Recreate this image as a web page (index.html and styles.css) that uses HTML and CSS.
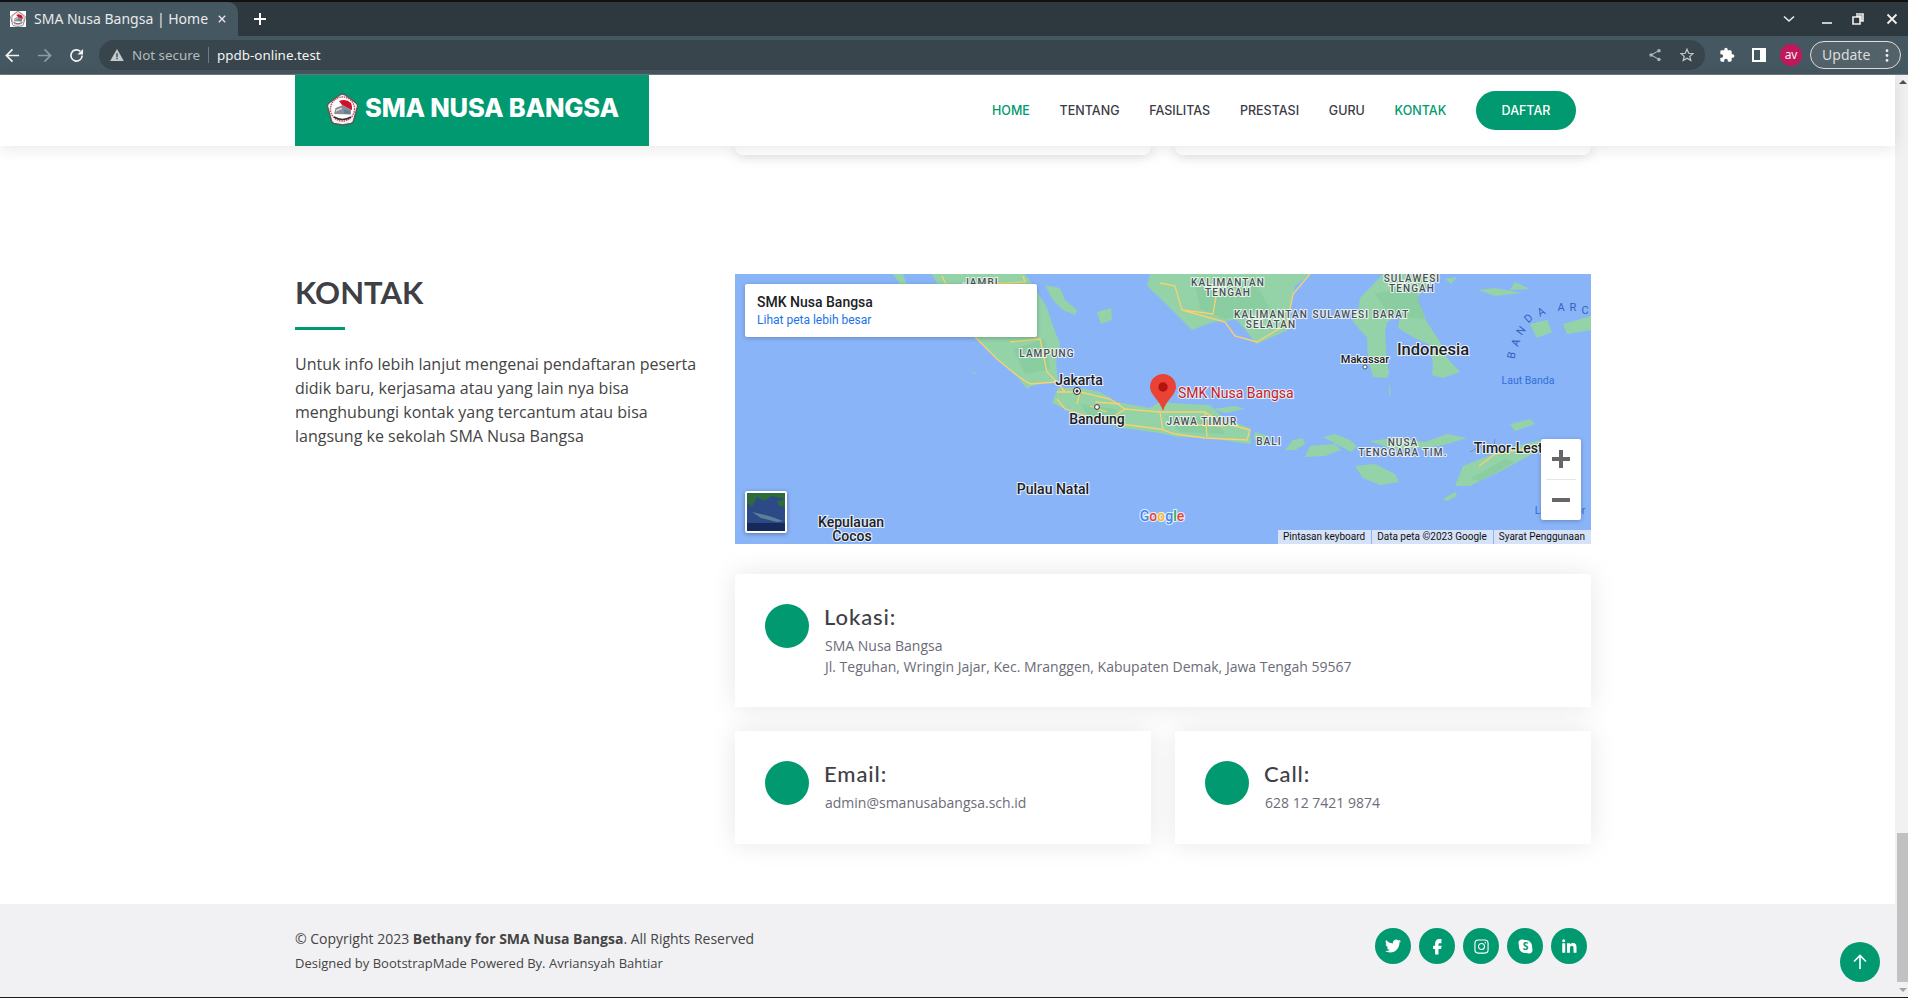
FILE: index.html
```html
<!DOCTYPE html>
<html lang="id">
<head>
<meta charset="utf-8">
<title>SMA Nusa Bangsa | Home</title>
<link rel="stylesheet" href="styles.css">
</head>
<body>
<svg class="defs" width="0" height="0" aria-hidden="true">
  <symbol id="emblem" viewBox="0 0 33 33">
    <path d="M16.5 1 Q17.500 1 18.500 1.500 L30 10 Q32 11.500 31.500 13.500 L27.500 28 Q27 30 25 30.500 L16.500 32 L8 30.500 Q6 30 5.500 28 L1.500 13.500 Q1 11.500 3 10 L14.500 1.500 Q15.500 1 16.5 1 Z" fill="#f2f2f2" stroke="#5a5a5a" stroke-width="1.400"/>
    <circle cx="16.5" cy="16" r="12" fill="#fff" stroke="#c9505c" stroke-width="1.400" stroke-dasharray="1.500 .8"/>
    <path d="M13 8 Q20 5 25 10 Q26.500 13 26 17 L18 14.500 Z" fill="#d0112b"/>
    <path d="M8 21 L9.500 15 L17 12 L25 16.500 L25 21.500 Z" fill="#8b8f94"/>
    <path d="M10 17 L16 14.500 L16 16 L10 18.500 Z" fill="#dfe2e4"/>
    <path d="M18 16.500 L24 18 L24 21 L18 20.500 Z" fill="#5f7f9c"/>
    <path d="M8 24 Q16.500 29 25 24" fill="none" stroke="#333" stroke-width="1.600"/>
  </symbol>
</svg>

<header class="chrome">
  <div class="tabstrip">
    <div class="tab">
      <svg class="favicon" aria-hidden="true"><use href="#emblem"/></svg>
      <span class="tab-title">SMA Nusa Bangsa | Home</span>
      <svg class="tab-close" viewBox="0 0 10 10" aria-hidden="true"><path d="M1 1 L9 9 M9 1 L1 9"/></svg>
    </div>
    <svg class="new-tab" viewBox="0 0 12 12" aria-hidden="true"><path d="M6 0 V12 M0 6 H12"/></svg>
    <div class="strip-space"></div>
    <svg class="tab-list" viewBox="0 0 12 8" aria-hidden="true"><path d="M1 1.500 L6 6 L11 1.500"/></svg>
    <svg class="win min" viewBox="0 0 12 12" aria-hidden="true"><path d="M1 10 H11"/></svg>
    <svg class="win restore" viewBox="0 0 12 12" aria-hidden="true"><path d="M4 1 H11 V8 H9 M1 4 H8 V11 H1 Z M4 3 H9 V8"/></svg>
    <svg class="win close" viewBox="0 0 12 12" aria-hidden="true"><path d="M1.500 1.500 L10.500 10.500 M10.500 1.500 L1.500 10.500"/></svg>
  </div>
  <div class="toolbar">
    <svg class="nav-ic" viewBox="0 0 16 16" aria-hidden="true"><path d="M15 8 H1.500 M8 1.500 L1.500 8 L8 14.500"/></svg>
    <svg class="nav-ic dim" viewBox="0 0 16 16" aria-hidden="true"><path d="M1 8 H14.500 M8 1.500 L14.500 8 L8 14.500"/></svg>
    <svg class="nav-ic" viewBox="0 0 16 16" aria-hidden="true"><path d="M14 8 A6 6 0 1 1 12 3.500"/><path class="solid" d="M15 1 V7 H9 Z"/></svg>
    <div class="omnibox">
      <svg class="warn" viewBox="0 0 16 14" aria-hidden="true"><path d="M8 0 L16 14 H0 Z" fill="#c4c9cc"/><path d="M7.200 5 H8.800 V9.500 H7.200 Z M7.200 10.500 H8.800 V12 H7.200 Z" fill="#38454c"/></svg>
      <span class="not-secure">Not secure</span>
      <span class="omni-div"></span>
      <span class="url">ppdb-online.test</span>
      <span class="omni-space"></span>
      <svg class="omni-ic" viewBox="0 0 16 16" aria-hidden="true"><circle cx="3.500" cy="8" r="2"/><circle cx="12.500" cy="3" r="2"/><circle cx="12.500" cy="13" r="2"/><path class="ln" d="M3.500 8 L12.500 3 M3.500 8 L12.500 13"/></svg>
      <svg class="omni-ic star" viewBox="0 0 16 16" aria-hidden="true"><path d="M8 1.500 L10 6 L14.800 6.400 L11.200 9.600 L12.300 14.400 L8 11.800 L3.700 14.400 L4.800 9.600 L1.200 6.400 L6 6 Z"/></svg>
    </div>
    <svg class="tool-ic puzzle" viewBox="0 0 24 24" aria-hidden="true"><path d="M20.500 11H19V7c0-1.100-.9-2-2-2h-4V3.500C13 2.120 11.880 1 10.500 1S8 2.120 8 3.500V5H4c-1.100 0-1.990.9-1.990 2v3.800H3.500c1.490 0 2.700 1.210 2.700 2.700s-1.210 2.700-2.700 2.700H2V20c0 1.100.9 2 2 2h3.800v-1.500c0-1.490 1.210-2.700 2.700-2.700 1.490 0 2.700 1.210 2.700 2.700V22H17c1.100 0 2-.9 2-2v-4h1.500c1.380 0 2.500-1.120 2.500-2.500S21.880 11 20.500 11z"/></svg>
    <svg class="tool-ic panel" viewBox="0 0 14 14" aria-hidden="true"><path d="M0 0 H14 V14 H0 Z M2 2 V12 H8 V2 Z" fill-rule="evenodd"/></svg>
    <span class="avatar">av</span>
    <div class="update">
      <span>Update</span>
      <svg class="dots" viewBox="0 0 4 16" aria-hidden="true"><circle cx="2" cy="2" r="1.700"/><circle cx="2" cy="8" r="1.700"/><circle cx="2" cy="14" r="1.700"/></svg>
    </div>
  </div>
</header>

<div class="viewport">
  <div class="page">
    <div class="site-header">
      <a class="brand">
        <svg class="brand-logo" aria-hidden="true"><use href="#emblem"/></svg>
        <span class="brand-name">SMA NUSA BANGSA</span>
      </a>
      <nav class="menu">
        <a class="menu-link active">HOME</a>
        <a class="menu-link">TENTANG</a>
        <a class="menu-link">FASILITAS</a>
        <a class="menu-link">PRESTASI</a>
        <a class="menu-link">GURU</a>
        <a class="menu-link active">KONTAK</a>
        <a class="cta">DAFTAR</a>
      </nav>
    </div>

    <main class="content">
      <div class="prev-cards">
        <div class="prev-card"></div>
        <div class="prev-card"></div>
      </div>

      <section class="contact">
        <div class="intro">
          <h2 class="title">KONTAK</h2>
          <p class="lead">Untuk info lebih lanjut mengenai pendaftaran peserta didik baru, kerjasama atau yang lain nya bisa menghubungi kontak yang tercantum atau bisa langsung ke sekolah SMA Nusa Bangsa</p>
        </div>
        <div class="details">
          <div class="map">
            <svg class="map-svg" viewBox="0 0 856 270" width="856" height="270">
              <rect width="856" height="270" fill="#8ab4f8"/>
              <g class="land">
                <path d="M158 0 L168 0 L172 11 L165 10 Z"/>
                <path d="M197 0 L290 0 L300 14 L312 34 L318 52 L325 70 L321 88 L323 108 L312 108 L296 112 L292 115 L280 100 L262 85 L240 63 L225 50 L210 25 Z"/>
                <path d="M310 11 L325 14 L330 26 L342 36 L340 41 L328 36 L318 26 Z"/>
                <path d="M362 38 L376 34 L377 46 L366 50 Z"/>
                <path d="M237 97 L243 100 L240 100 Z"/>
                <path d="M317 129 L323 114 L345 114 L365 118 L382 128 L415 134 L425 128 L450 130 L475 131 L490 145 L515 154 L516 170 L500 168 L475 164 L442 163 L425 159 L388 154 L362 146 L328 134 Z"/>
                <path d="M478 135 L500 132 L510 135 L490 139 Z"/>
                <path d="M520 158 L534 162 L530 170 L519 165 Z"/>
                <path d="M550 176 L558 166 L568 164 L570 170 L560 176 Z"/>
                <path d="M570 183 L575 172 L600 170 L606 176 L590 182 Z"/>
                <path d="M588 163 L600 160 L615 166 L622 172 L616 178 L605 172 Z"/>
                <path d="M635 167 L660 164 L690 168 L712 160 L732 164 L705 172 L660 176 Z"/>
                <path d="M620 192 L640 190 L660 200 L664 208 L645 211 L628 204 Z"/>
                <path d="M720 212 L728 192 L770 175 L806 166 L806 175 L770 195 L735 212 Z"/>
                <path d="M708 225 L720 218 L722 222 L712 227 Z"/>
                <path d="M775 150 L795 145 L800 150 L780 157 Z"/>
                <path d="M415 0 L575 0 L560 12 L557 24 L553 56 L522 70 L502 46 L478 48 L457 56 L425 24 L412 12 Z"/>
                <path d="M648 0 L625 24 L623 39 L617 46 L625 56 L632 63 L633 84 L638 103 L652 104 L654 98 L652 88 L650 58 L652 48 L665 41 L663 54 L678 63 L695 71 L698 91 L697 101 L708 104 L725 98 L712 84 L705 68 L692 48 L682 24 L692 11 L705 4 L702 0 Z"/>
                <path d="M654 108 L656 122 L654 120 Z"/>
                <path d="M743 16 L760 14 L787 19 L760 22 Z"/>
                <path d="M710 5 L722 3 L716 10 Z"/>
                <path d="M780 8 L795 15 L775 16 Z"/>
                <path d="M795 50 L812 46 L817 58 L802 64 Z"/>
                <path d="M828 50 L856 42 L856 56 L832 60 Z"/>
              </g>
              <g class="patch">
                <path d="M250 20 L285 10 L300 40 L270 60 Z"/>
                <path d="M278 75 L310 65 L315 95 L290 100 Z"/>
                <path d="M345 130 L380 135 L390 148 L355 145 Z"/>
                <path d="M460 10 L520 8 L535 35 L490 45 L465 35 Z"/>
                <path d="M430 142 L480 145 L490 160 L445 158 Z"/>
                <path d="M640 20 L680 10 L690 45 L655 42 Z"/>
                <path d="M735 205 L770 185 L780 188 L745 207 Z"/>
              </g>
              <g class="roads">
                <path d="M240 63 L262 85 L280 100 L295 110 L322 108"/>
                <path d="M275 68 L305 65 L312 98 L322 108 L330 118"/>
                <path d="M207 2 L215 18 M288 2 L290 8 L250 10"/>
                <path d="M322 118 L345 118 L375 125 L390 135 L425 138 L470 138 L485 148 L515 156 L512 166 L470 164 L440 160 L425 155 L385 150 L355 143 L330 135 L322 125"/>
                <path d="M345 118 L342 130 M390 135 L375 145 M425 138 L428 156 M470 138 L472 163 M360 128 L385 130 M355 132 L372 138 M440 150 L490 152"/>
                <path d="M425 9 L440 12 L447 36 L478 40 L482 16 M447 36 L490 48 L500 62 L522 68 L552 50 L558 20 L575 0"/>
                <path d="M744 192 L760 180 L806 172"/>
              </g>
              <g class="roads thin"><path d="M735 178 L745 172 L752 180 M760 165 L758 178"/></g>

              <text class="l caps" x="246" y="12">JAMBI</text>
              <text class="l caps" x="312" y="83">LAMPUNG</text>
              <text class="l caps" x="493" y="12">KALIMANTAN</text>
              <text class="l caps" x="493" y="22">TENGAH</text>
              <text class="l caps" x="536" y="44">KALIMANTAN</text>
              <text class="l caps" x="536" y="54">SELATAN</text>
              <text class="l caps" x="626" y="44">SULAWESI BARAT</text>
              <text class="l caps" x="677" y="8">SULAWESI</text>
              <text class="l caps" x="677" y="18">TENGAH</text>
              <text class="l caps" x="467" y="151">JAWA TIMUR</text>
              <text class="l caps" x="534" y="171">BALI</text>
              <text class="l caps" x="668" y="172">NUSA</text>
              <text class="l caps" x="668" y="182">TENGGARA TIM.</text>

              <text class="l city" x="344" y="111">Jakarta</text>
              <text class="l city" x="362" y="150">Bandung</text>
              <text class="l city" x="777" y="179">Timor-Leste</text>
              <text class="l city sm" x="630" y="89">Makassar</text>
              <text class="l country" x="698" y="81">Indonesia</text>
              <text class="l city" x="318" y="220">Pulau Natal</text>
              <text class="l city" x="116" y="253">Kepulauan</text>
              <text class="l city" x="117" y="267">Cocos</text>

              <text class="l sea" x="793" y="110">Laut Banda</text>
              <text class="l sea" x="825" y="240">Laut Timor</text>
              <g class="arc">
                <text transform="translate(780 82) rotate(-80)">B</text>
                <text transform="translate(784 70) rotate(-68)">A</text>
                <text transform="translate(789 59) rotate(-52)">N</text>
                <text transform="translate(796 47) rotate(-42)">D</text>
                <text transform="translate(808 41) rotate(-28)">A</text>
                <text transform="translate(826 37)">A</text>
                <text transform="translate(838 37)">R</text>
                <text transform="translate(850 40)">C</text>
              </g>

              <circle cx="342" cy="117" r="3.500" fill="#fff" stroke="#222" stroke-width="1"/>
              <circle cx="342" cy="117" r="1.500" fill="#222"/>
              <circle cx="362" cy="133" r="2.400" fill="#fff" stroke="#333" stroke-width="1"/>
              <circle cx="630" cy="93" r="2" fill="#fff" stroke="#333" stroke-width=".8"/>

              <path d="M428 137 C425 126 415 121 415 113 A13 13 0 1 1 441 113 C441 121 431 126 428 137 Z" fill="#ea4335"/>
              <circle cx="428" cy="113" r="4.700" fill="#b31412"/>
              <text class="l pin" x="443" y="124">SMK Nusa Bangsa</text>

              <text class="l logo" x="427" y="247"><tspan fill="#4285f4">G</tspan><tspan fill="#ea4335">o</tspan><tspan fill="#fbbc04">o</tspan><tspan fill="#4285f4">g</tspan><tspan fill="#34a853">l</tspan><tspan fill="#ea4335">e</tspan></text>
            </svg>

            <div class="place-card">
              <div class="place-name">SMK Nusa Bangsa</div>
              <a class="place-link">Lihat peta lebih besar</a>
            </div>

            <div class="layer-thumb">
              <svg viewBox="0 0 38 38" width="38" height="38" aria-hidden="true">
                <rect width="38" height="38" fill="#2b4a86"/>
                <path d="M0 0 H38 V6 L24 3 L18 8 L10 4 L5 14 L0 10 Z" fill="#2f6a3d"/>
                <path d="M30 8 L38 6 V14 L32 13 Z" fill="#2f6a3d"/>
                <path d="M5 19 L22 23 L36 28 L30 29 L14 25 Z" fill="#5f7f98"/>
                <path d="M0 30 H38 V38 H0 Z" fill="#16295c"/>
              </svg>
            </div>

            <div class="zoom-ctl">
              <button class="zoom-btn" aria-label="Zoom in"><svg viewBox="0 0 18 18" width="18" height="18"><path d="M0 7 H7 V0 H11 V7 H18 V11 H11 V18 H7 V11 H0 Z"/></svg></button>
              <span class="zoom-sep"></span>
              <button class="zoom-btn" aria-label="Zoom out"><svg viewBox="0 0 18 18" width="18" height="18"><path d="M0 7 H18 V11 H0 Z"/></svg></button>
            </div>

            <div class="attrib">
              <span>Pintasan keyboard</span>
              <span>Data peta ©2023 Google</span>
              <span>Syarat Penggunaan</span>
            </div>
          </div>

          <div class="info wide">
            <span class="dot"></span>
            <div>
              <h4 class="info-title">Lokasi:</h4>
              <p class="info-text">SMA Nusa Bangsa<br>Jl. Teguhan, Wringin Jajar, Kec. Mranggen, Kabupaten Demak, Jawa Tengah 59567</p>
            </div>
          </div>
          <div class="info-row">
            <div class="info">
              <span class="dot"></span>
              <div>
                <h4 class="info-title">Email:</h4>
                <p class="info-text">admin@smanusabangsa.sch.id</p>
              </div>
            </div>
            <div class="info">
              <span class="dot"></span>
              <div>
                <h4 class="info-title">Call:</h4>
                <p class="info-text">628 12 7421 9874</p>
              </div>
            </div>
          </div>
        </div>
      </section>
    </main>

    <footer class="footer">
      <div class="foot-inner">
        <div>
          <div class="copy">© Copyright 2023 <strong>Bethany for SMA Nusa Bangsa</strong>. All Rights Reserved</div>
          <div class="credit">Designed by BootstrapMade Powered By. Avriansyah Bahtiar</div>
        </div>
        <div class="social">
          <a class="soc"><svg viewBox="0 0 24 24" width="16" height="16" aria-hidden="true"><path d="M23.953 4.570a10 10 0 01-2.825.775 4.958 4.958 0 002.163-2.723c-.951.555-2.005.959-3.127 1.184a4.920 4.920 0 00-8.384 4.482C7.690 8.095 4.067 6.130 1.640 3.162a4.822 4.822 0 00-.666 2.475c0 1.710.870 3.213 2.188 4.096a4.904 4.904 0 01-2.228-.616v.060a4.923 4.923 0 003.946 4.827 4.996 4.996 0 01-2.212.085 4.936 4.936 0 004.604 3.417 9.867 9.867 0 01-6.102 2.105c-.390 0-.779-.023-1.170-.067a13.995 13.995 0 007.557 2.209c9.053 0 13.998-7.496 13.998-13.985 0-.210 0-.420-.015-.630A9.935 9.935 0 0024 4.590z"/></svg></a>
          <a class="soc"><svg viewBox="0 0 24 24" width="19" height="19" aria-hidden="true"><path d="M14 8h3V2.500h-3c-2.800 0-5 2.200-5 5V11H6.500v4H9v7h4.200v-7H16.500l.7-4h-4V9c0-.6.3-1 .8-1z"/></svg></a>
          <a class="soc"><svg class="ig" viewBox="0 0 16 16" width="15" height="15" aria-hidden="true"><rect x="1" y="1" width="14" height="14" rx="3.500"/><circle cx="8" cy="8" r="3.200"/><circle class="ig-dot" cx="12" cy="4" r=".8"/></svg></a>
          <a class="soc"><svg viewBox="0 0 16 16" width="15" height="15" aria-hidden="true"><path d="M4 .5 C5.500 .5 6.500 1 8 1 C12 1 15 4 15 8 C15 9.500 15.500 10.500 15.500 12 C15.500 14 14 15.500 12 15.500 C10.500 15.500 9.500 15 8 15 C4 15 1 12 1 8 C1 6.500 .5 5.500 .5 4 C.5 2 2 .5 4 .5 Z"/><text class="skype-s" x="8" y="12">S</text></svg></a>
          <a class="soc"><svg viewBox="0 0 24 24" width="18" height="18" aria-hidden="true"><path d="M6.940 5a2 2 0 11-4-.002 2 2 0 014 .002zM7 8.480H3V21h4V8.480zm6.320 0H9.340V21h3.940v-6.570c0-3.660 4.770-4 4.770 0V21H22v-7.930c0-6.170-7.060-5.940-8.720-2.910l.04-1.680z"/></svg></a>
        </div>
      </div>
    </footer>

    <a class="to-top" aria-label="Back to top"><svg viewBox="0 0 16 16" width="16" height="16"><path d="M8 15 V1.500 M2 7.500 L8 1.500 L14 7.500"/></svg></a>
  </div>

  <div class="scrollbar">
    <span class="arrow up"></span>
    <div class="track"><div class="thumb"></div></div>
    <span class="arrow down"></span>
  </div>
</div>
<div class="edge"></div>
</body>
</html>
```

FILE: styles.css
```css
* { box-sizing: border-box; }
html, body { margin: 0; padding: 0; height: 998px; overflow: hidden; }
body { font-family: "Open Sans", sans-serif; color: #444; background: #fff; }
.defs { position: absolute; }
svg { display: block; flex: none; }

/* browser chrome */
.chrome { height: 75px; background: #111; padding-top: 2px; }
.tabstrip { height: 34px; background: #2e393f; display: flex; align-items: center; }
.tab { width: 238px; height: 34px; background: #455760; border-radius: 0 10px 0 0; display: flex; align-items: center; padding-left: 10px; }
.favicon { width: 16px; height: 16px; background: #fff; }
.tab-title { margin-left: 8px; font: 14px/16px "Noto Sans", sans-serif; color: #e8eaed; width: 172px; white-space: nowrap; margin-top: -1px; }
.tab-close { width: 8px; height: 8px; margin-left: 12px; fill: none; stroke: #e8eaed; stroke-width: 1.6; }
.new-tab { width: 12px; height: 12px; margin-left: 16px; fill: none; stroke: #fff; stroke-width: 2; }
.strip-space { flex: 1; }
.tab-list { width: 12px; height: 8px; fill: none; stroke: #e8eaed; stroke-width: 1.6; margin-right: 26px; }
.win { width: 12px; height: 12px; fill: none; stroke: #f0f0f0; stroke-width: 1.6; }
.win.min { margin-right: 19px; }
.win.restore { margin-right: 22px; }
.win.close { margin-right: 10px; stroke-width: 1.8; }

.toolbar { height: 39px; background: #455760; border-bottom: 1px solid #6d7b83; display: flex; align-items: center; padding: 0 7px 0 5px; }
.nav-ic { width: 15px; height: 15px; fill: none; stroke: #f1f3f4; stroke-width: 1.8; margin-right: 17px; }
.nav-ic.dim { stroke: #8f9ba2; }
.nav-ic .solid { fill: #f1f3f4; stroke: none; }
.omnibox { width: 1607px; margin-left: -2px; height: 30px; border-radius: 15px; background: #38454c; display: flex; align-items: center; padding: 0 11px; }
.warn { width: 14px; height: 12px; }
.not-secure { margin-left: 8px; font: 13.400px "Noto Sans", sans-serif; color: #b3bbbf; margin-top: -1px; }
.omni-div { width: 1px; height: 16px; background: #6d7b83; margin: 0 8px; }
.url { font: 13.400px "Noto Sans", sans-serif; color: #f1f3f4; margin-top: -1px; }
.omni-space { flex: 1; }
.omni-ic { width: 14px; height: 14px; fill: #aeb6ba; }
.omni-ic .ln { stroke: #aeb6ba; stroke-width: 1.2; fill: none; }
.omni-ic.star { fill: none; stroke: #c4cacd; stroke-width: 1.4; margin-left: 18px; margin-right: 0; }
.tool-ic { fill: #fff; }
.puzzle { width: 16px; height: 16px; margin-left: 14px; }
.panel { width: 14px; height: 14px; margin-left: 17px; }
.avatar { width: 22px; height: 22px; margin-left: 14px; border-radius: 50%; background: #c2185b; color: #f4f4f4; font: 12px/21px "Noto Sans", sans-serif; text-align: center; }
.update { width: 91px; height: 28px; margin-left: 8px; border: 1px solid #e6dcd6; border-radius: 14px; background: #536169; color: #d9dddf; font: 14px/26px "Noto Sans", sans-serif; display: flex; align-items: center; justify-content: space-between; padding: 0 11px; }
.dots { width: 4px; height: 13px; fill: #eceff0; }

/* viewport */
.viewport { height: 922px; display: flex; }
.page { flex: 1; min-width: 0; position: relative; display: flex; flex-direction: column; }
.edge { height: 1px; background: #1b1b1f; }
.scrollbar { width: 13px; background: #f1f1f1; display: flex; flex-direction: column; align-items: center; }
.track { flex: 1; width: 100%; padding: 744px 0 0 2px; }
.thumb { height: 149px; background: #c1c1c1; }
.arrow { width: 0; height: 0; border-left: 4px solid transparent; border-right: 4px solid transparent; margin-left: 2px; }
.arrow.up { border-bottom: 4px solid #505050; margin-top: 5px; margin-bottom: 5px; }
.arrow.down { border-top: 4px solid #a3a3a3; margin-top: 5px; margin-bottom: 5px; }

/* site header */
.site-header { height: 71px; padding-left: 295px; background: #fff; display: flex; align-items: stretch; box-shadow: 0 2px 15px rgba(0,0,0,.1); position: relative; z-index: 2; }
.brand { width: 354px; background: #009970; color: #fff; display: flex; align-items: center; padding: 0 0 2px 31px; gap: 6px; }
.brand-name { font: 800 25.500px/30px Inter, sans-serif; letter-spacing: -.2px; white-space: nowrap; margin-bottom: 4px; }
.brand-logo { width: 33px; height: 33px; }
.menu { margin-left: 343px; display: flex; align-items: center; gap: 29.750px; }
.menu-link { font: 500 12.500px Inter, sans-serif; color: #3b3b47; white-space: nowrap; }
.menu-link.active { color: #009970; }
.cta { width: 100px; height: 39px; border-radius: 20px; background: #009970; color: #fff; font: 500 12.500px/39px Inter, sans-serif; text-align: center; }

/* content */
.content { flex: 1; padding-left: 295px; }
.prev-cards { width: 856px; margin-left: 440px; display: flex; gap: 24px; }
.prev-card { flex: 1; height: 9px; background: #fff; border-radius: 0 0 8px 8px; box-shadow: 0 1px 12px rgba(190,191,192,.7); }
.contact { width: 1296px; margin-top: 119px; display: flex; gap: 24px; }
.intro { width: 416px; }
.title { margin: 0 0 22px; padding-bottom: 20px; font: 700 31px/36px Lato, sans-serif; color: #3f3f46; position: relative; }
.title::after { content: ""; position: absolute; left: 0; bottom: 0; width: 50px; height: 3px; background: #009970; }
.lead { margin: 0; font-size: 16px; line-height: 24px; color: #444; }
.details { width: 856px; }

/* map */
.map { height: 270px; position: relative; overflow: hidden; }
.map-svg { font-family: Roboto, sans-serif; }
.land path { fill: #94d3a8; stroke: none; }
.patch path { fill: #82c99a; opacity: .55; }
.roads path { fill: none; stroke: #fbd06d; stroke-width: 1.3; }
.roads.thin path { stroke: #7a8a7f; stroke-width: .8; }
.l { paint-order: stroke; stroke: rgba(255,255,255,.75); stroke-width: 2.2px; text-anchor: middle; }
.caps { font-size: 10px; font-weight: 500; letter-spacing: 1.1px; fill: #4a4f54; }
.city { font-size: 14px; font-weight: 500; fill: #202124; }
.city.sm { font-size: 11px; }
.country { font-size: 16.500px; font-weight: 500; fill: #202124; }
.sea { font-size: 10.500px; fill: #2f6fd6; stroke: none; }
.arc text { font-size: 11px; fill: #2f63c4; text-anchor: middle; }
.pin { font-size: 14px; font-weight: 400; fill: #c5221f; text-anchor: start; }
.logo { font-size: 14px; font-weight: 500; }
.place-card { position: absolute; left: 10px; top: 10px; width: 292px; height: 53px; padding: 10px 12px 0; background: #fff; border-radius: 2px; box-shadow: 0 1px 4px rgba(0,0,0,.25); font-family: Roboto, sans-serif; }
.place-name { font-size: 14px; font-weight: 500; line-height: 17px; color: #202124; }
.place-link { display: block; margin-top: 1px; font-size: 12px; line-height: 17px; color: #1a73e8; }
.layer-thumb { position: absolute; left: 10px; top: 217px; width: 42px; height: 42px; padding: 2px; border-radius: 2px; background: #fff; box-shadow: 0 1px 4px rgba(0,0,0,.35); }
.zoom-ctl { position: absolute; left: 806px; top: 165px; width: 40px; height: 81px; background: #fff; border-radius: 2px; box-shadow: 0 1px 4px rgba(0,0,0,.25); display: flex; flex-direction: column; align-items: center; }
.zoom-btn { flex: 1; width: 40px; padding: 0; border: 0; background: none; display: flex; align-items: center; justify-content: center; fill: #666; }
.zoom-sep { width: 30px; height: 1px; background: #e6e6e6; }
.attrib { position: absolute; right: 0; bottom: 0; height: 14px; display: flex; gap: 1px; font: 10px/14px Roboto, sans-serif; color: #111; }
.attrib span { padding: 0 6px 0 5px; background: #d5e2f8; }

/* info cards */
.info { display: flex; gap: 16px; padding: 30px; background: #fff; box-shadow: 0 0 24px rgba(214,215,216,.6); }
.info.wide { margin-top: 30px; height: 133px; }
.info-row { display: flex; gap: 24px; margin-top: 24px; }
.info-row .info { flex: 1; height: 113px; }
.dot { width: 44px; height: 44px; border-radius: 50%; background: #009970; flex: none; }
.info-title { margin: 0 0 5px -1px; font: 500 22px/26px Lato, sans-serif; letter-spacing: .9px; color: #3f3f46; }
.info-text { margin: 0; font-size: 14px; line-height: 21px; color: #6c6c78; }

/* footer */
.footer { height: 93px; background: #f1f1f3; padding: 24px 0 0 295px; }
.foot-inner { width: 1296px; display: flex; justify-content: space-between; }
.copy { font-size: 14px; line-height: 21px; color: #444; }
.credit { font-size: 13px; line-height: 20px; margin-top: 4px; color: #444; }
.social { display: flex; gap: 8px; padding-right: 4px; }
.soc { width: 36px; height: 36px; border-radius: 50%; background: #009970; fill: #fff; display: flex; align-items: center; justify-content: center; }
.ig { fill: none; stroke: #fff; stroke-width: 1.2; }
.ig .ig-dot { fill: #fff; stroke: none; }
.skype-s { fill: #009970; font: 700 11px "Open Sans", sans-serif; text-anchor: middle; }
.to-top { position: absolute; right: 15px; bottom: 15px; width: 40px; height: 40px; border-radius: 50%; background: #009970; display: flex; align-items: center; justify-content: center; fill: none; stroke: #fff; stroke-width: 1.6; }
```
